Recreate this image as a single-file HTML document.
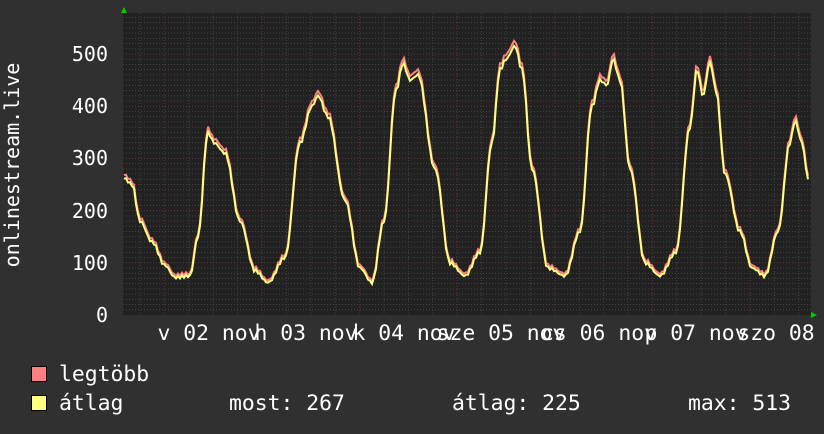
<!DOCTYPE html>
<html><head><meta charset="utf-8"><style>
body{margin:0;background:#303030;width:824px;height:430px;overflow:hidden;font-family:"DejaVu Sans Mono","Liberation Mono",monospace;}
svg text{font-family:"DejaVu Sans Mono","Liberation Mono",monospace;fill:#fff;font-size:20px;}
svg text.l{font-size:21.4px;}
</style></head><body>
<svg id="s" width="824" height="430" xmlns="http://www.w3.org/2000/svg">
<rect width="824" height="430" fill="#303030"/>
<rect x="123" y="13" width="688" height="302" fill="#212121"/>
<g id="grid"></g>
<polygon points="121,13 127,13 124,7" fill="#00cc00"/>
<polygon points="811,312 811,318 817,315" fill="#00cc00"/>
<g text-anchor="end">
<text x="108" y="61">500</text><text x="108" y="113">400</text><text x="108" y="165">300</text>
<text x="108" y="218">200</text><text x="108" y="270">100</text><text x="108" y="322">0</text>
</g>
<text transform="translate(19,165) rotate(-90)" text-anchor="middle">onlinestream.live</text>
<g id="xl"></g>
<polyline id="pr" fill="none" stroke="#ff8080" stroke-width="2"/>
<polyline id="py" fill="none" stroke="#ffff80" stroke-width="2"/>
<rect x="31.5" y="366.5" width="15" height="15" fill="#ff8080" stroke="#000"/>
<rect x="31.5" y="395.5" width="15" height="15" fill="#ffff80" stroke="#000"/>
<text class="l" x="59" y="381">legtöbb</text>
<text class="l" x="59" y="410">átlag</text>
<text class="l" x="229" y="410">most: 267</text>
<text class="l" x="452" y="410">átlag: 225</text>
<text class="l" x="688" y="410">max: 513</text>
</svg>
<script>
var g=document.getElementById('grid'),h='';
for(var v=10;v<580;v+=10){var y=315-v*0.522;if(y<13)break;
 h+='<line x1="123" x2="811" y1="'+y+'" y2="'+y+'" stroke="'+(v%100==0?'#703030':'#444')+'" stroke-dasharray="1,2"/>';}
for(var x=140;x<811;x+=24.4){var maj=Math.abs(((x-164)/97.6)-Math.round((x-164)/97.6))<0.05;
 h+='<line y1="13" y2="315" x1="'+x+'" x2="'+x+'" stroke="'+(maj?'#703030':'#444')+'" stroke-dasharray="1,2"/>';}
g.innerHTML=h;
var lab=[["v 02 nov",209],["h 03 nov",306],["k 04 nov",404],["sze 05 nov",501],["cs 06 nov",599],["p 07 nov",696],["szo 08",776]],t='';
lab.forEach(function(l){t+='<text class="l" x="'+l[1]+'" y="340" text-anchor="middle">'+l[0]+'</text>';});
document.getElementById('xl').innerHTML=t;
var k=[[124,262],[132,250],[140,180],[152,140],[165,95],[175,72],[190,75],[198,150],[208,350],[214,330],[225,310],[240,180],[255,85],[268,62],[285,110],[300,330],[312,400],[318,420],[328,380],[345,220],[360,90],[372,62],[384,180],[396,430],[403,482],[410,450],[418,460],[435,280],[450,100],[465,75],[480,120],[492,330],[500,470],[506,490],[515,515],[522,470],[532,280],[548,90],[565,75],[580,160],[592,400],[600,450],[607,440],[613,490],[620,450],[630,280],[645,100],[660,75],[676,120],[690,360],[697,470],[703,420],[710,485],[716,430],[725,270],[740,160],[752,90],[765,75],[778,160],[790,330],[795,372],[802,330],[808,262]];
var pr=[],py=[];
for(var x=124;x<=808;x+=2){var i=0;while(i<k.length-2&&k[i+1][0]<x)i++;var a=k[i],b=k[i+1],f=(x-a[0])/(b[0]-a[0]);f=(1-Math.cos(Math.PI*f))/2;
 var v=a[1]+(b[1]-a[1])*f+Math.sin(x*1.7)*3;var yy=315-v*0.522;py.push(x+','+yy.toFixed(1));pr.push(x+','+(yy-2-v*0.006).toFixed(1));}
document.getElementById('pr').setAttribute('points',pr.join(' '));
document.getElementById('py').setAttribute('points',py.join(' '));
</script>
</body></html>
